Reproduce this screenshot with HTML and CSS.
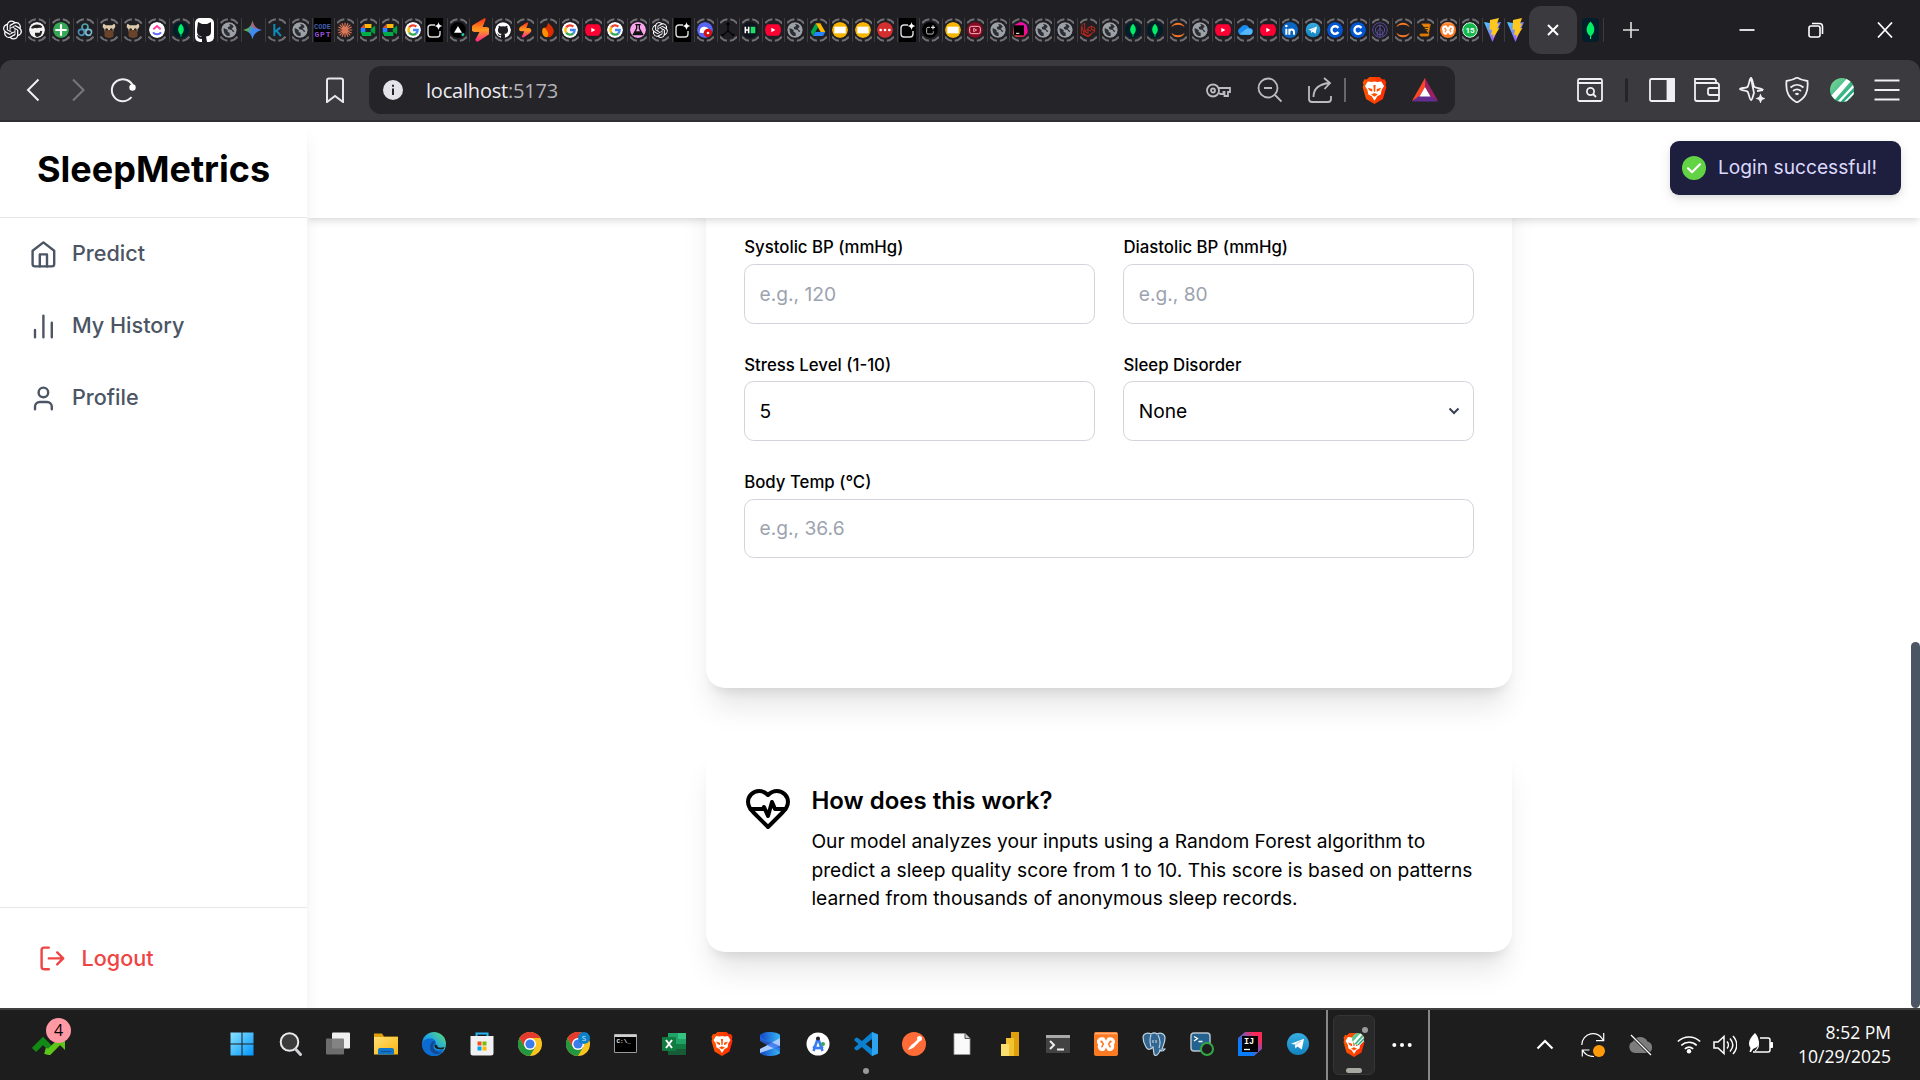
FILE: index.html
```html
<!DOCTYPE html>
<html lang="en">
<head>
<meta charset="utf-8">
<title>SleepMetrics</title>
<link rel="stylesheet" href="styles.css">
</head>
<body>
<svg class="defs" aria-hidden="true">
<defs>
<linearGradient id="g-gem" x1="0" y1="0.3" x2="1" y2="0.7"><stop offset="0" stop-color="#f5b51c"/><stop offset=".25" stop-color="#4fae5c"/><stop offset=".5" stop-color="#3f8bf2"/><stop offset="1" stop-color="#3f86f5"/></linearGradient>
<linearGradient id="g-fire" x1="0" y1="0" x2="0" y2="1"><stop offset="0" stop-color="#ff2d1a"/><stop offset=".5" stop-color="#ff9a1f"/><stop offset="1" stop-color="#ff1f8f"/></linearGradient>
<linearGradient id="g-vite" x1="0" y1="0" x2="1" y2="1"><stop offset="0" stop-color="#41d1ff"/><stop offset="1" stop-color="#bd34fe"/></linearGradient>
<linearGradient id="g-win" x1="0" y1="0" x2="1" y2="1"><stop offset="0" stop-color="#8be3ff"/><stop offset="1" stop-color="#0095ff"/></linearGradient>
<linearGradient id="g-edge" x1="0" y1="1" x2="1" y2="0"><stop offset="0" stop-color="#0a63c9"/><stop offset=".5" stop-color="#1fa5e6"/><stop offset="1" stop-color="#5fe06a"/></linearGradient>
<linearGradient id="g-brave" x1="0" y1="0" x2="1" y2="0"><stop offset="0" stop-color="#ff5601"/><stop offset="1" stop-color="#ff2a00"/></linearGradient>
<linearGradient id="g-fold" x1="0" y1="0" x2="1" y2="1"><stop offset="0" stop-color="#ffdf75"/><stop offset="1" stop-color="#f9b50b"/></linearGradient>
<linearGradient id="g-cyl" x1="0" y1="0" x2="1" y2="0"><stop offset="0" stop-color="#1146c8"/><stop offset="1" stop-color="#38b6f5"/></linearGradient>
<linearGradient id="g-ij" x1="0" y1="1" x2="1" y2="0"><stop offset=".3" stop-color="#087cfa"/><stop offset=".55" stop-color="#7a55b5"/><stop offset=".8" stop-color="#fe2857"/></linearGradient>
<linearGradient id="g-pink" x1="0" y1="1" x2="1" y2="0"><stop offset="0" stop-color="#ff7a1a"/><stop offset=".4" stop-color="#ff0a78"/><stop offset="1" stop-color="#e010c8"/></linearGradient>
<linearGradient id="g-green" x1="0" y1="0" x2="1" y2="1"><stop offset="0" stop-color="#7fd99a"/><stop offset="1" stop-color="#0d9d78"/></linearGradient>
<linearGradient id="g-tg" x1="0" y1="0" x2="0" y2="1"><stop offset="0" stop-color="#37aee2"/><stop offset="1" stop-color="#1282c0"/></linearGradient>
</defs>
<symbol id="openai" viewBox="0 0 24 24"><path fill="#fff" d="M22.2819 9.8211a5.9847 5.9847 0 0 0-.5157-4.9108 6.0462 6.0462 0 0 0-6.5098-2.9A6.0651 6.0651 0 0 0 4.9807 4.1818a5.9847 5.9847 0 0 0-3.9977 2.9 6.0462 6.0462 0 0 0 .7427 7.0966 5.98 5.98 0 0 0 .511 4.9107 6.051 6.051 0 0 0 6.5146 2.9001A5.9847 5.9847 0 0 0 13.2599 24a6.0557 6.0557 0 0 0 5.7718-4.2058 5.9894 5.9894 0 0 0 3.9977-2.9001 6.0557 6.0557 0 0 0-.7475-7.0729zm-9.022 12.6081a4.4755 4.4755 0 0 1-2.8764-1.0408l.1419-.0804 4.7783-2.7582a.7948.7948 0 0 0 .3927-.6813v-6.7369l2.02 1.1686a.071.071 0 0 1 .038.052v5.5826a4.504 4.504 0 0 1-4.4945 4.4944zm-9.6607-4.1254a4.4708 4.4708 0 0 1-.5346-3.0137l.142.0852 4.783 2.7582a.7712.7712 0 0 0 .7806 0l5.8428-3.3685v2.3324a.0804.0804 0 0 1-.0332.0615L9.74 19.9502a4.4992 4.4992 0 0 1-6.1408-1.6464zM2.3408 7.8956a4.485 4.485 0 0 1 2.3655-1.9728V11.6a.7664.7664 0 0 0 .3879.6765l5.8144 3.3543-2.0201 1.1685a.0757.0757 0 0 1-.071 0l-4.8303-2.7865A4.504 4.504 0 0 1 2.3408 7.872zm16.5963 3.8558L13.1038 8.364 15.1192 7.2a.0757.0757 0 0 1 .071 0l4.8303 2.7913a4.4944 4.4944 0 0 1-.6765 8.1042v-5.6772a.79.79 0 0 0-.407-.667zm2.0107-3.0231l-.142-.0852-4.7735-2.7818a.7759.7759 0 0 0-.7854 0L9.409 9.2297V6.8974a.0662.0662 0 0 1 .0284-.0615l4.8303-2.7866a4.4992 4.4992 0 0 1 6.6802 4.66zM8.3065 12.863l-2.02-1.1638a.0804.0804 0 0 1-.038-.0567V6.0742a4.4992 4.4992 0 0 1 7.3757-3.4537l-.142.0805L8.704 5.459a.7948.7948 0 0 0-.3927.6813zm1.0976-2.3654l2.602-1.4998 2.6069 1.4998v2.9994l-2.5974 1.4997-2.6067-1.4997Z"/></symbol>
<symbol id="beard" viewBox="0 0 24 24"><circle cx="12" cy="12" r="12" fill="#f3f3f3"/><path d="M3 9c2-6 13-7 17-2l-2 2c-4-1-6 1-8 0-3 0-4 2-7 0zM9 16h7l1-3 3 1-2 6-6 3-3-3z" fill="#252020"/></symbol>
<symbol id="plus" viewBox="0 0 24 24"><circle cx="12" cy="12" r="12" fill="#34a853"/><path d="M12 3.500v17M3.500 12h17" stroke="#fff" stroke-width="3.200"/></symbol>
<symbol id="trio" viewBox="0 0 24 24"><g fill="none" stroke-width="2.600"><circle cx="12" cy="7.500" r="4.500" stroke="#4fa3a8"/><circle cx="6.500" cy="15.500" r="4.500" stroke="#4c8fb8"/><circle cx="17.500" cy="15.500" r="4.500" stroke="#79b8cf"/></g></symbol>
<symbol id="goat" viewBox="0 0 24 24"><path d="M4 1c-3 5-1 8 1 9l2 12h10l2-12c2-1 4-4 1-9-1 3-3 4-5 4H9C7 5 5 4 4 1z" fill="#dcc9ab"/><path d="M6 12h12l1 8-4 4H9l-4-4z" fill="#6b422a"/><circle cx="8.500" cy="11" r="1.800" fill="#222"/><circle cx="15.500" cy="11" r="1.800" fill="#222"/></symbol>
<symbol id="clickup" viewBox="0 0 24 24"><circle cx="12" cy="12" r="12" fill="#fff"/><path d="M6.500 11 12 6l5.500 5" fill="none" stroke="#ff3fa0" stroke-width="3"/><path d="M6 15.500c3 4 9 4 12 0" fill="none" stroke="#5d6bff" stroke-width="3"/></symbol>
<symbol id="mongo" viewBox="0 0 24 24"><rect width="24" height="24" rx="9" fill="#021e2b"/><path d="M12 2.500c6 6 5 12 .6 16.500V22h-1.200v-3C7 14.500 6 8.500 12 2.500z" fill="#00ed64"/></symbol>
<symbol id="github" viewBox="0 0 24 24"><path fill="#fff" d="M12 .5a12 12 0 0 0-3.800 23.400c.6.1.8-.3.8-.6v-2.200c-3.300.7-4-1.400-4-1.400-.6-1.400-1.300-1.800-1.300-1.800-1.100-.7.100-.7.100-.7 1.200.1 1.800 1.200 1.800 1.200 1.100 1.800 2.800 1.300 3.500 1 .1-.8.400-1.300.8-1.600-2.700-.3-5.500-1.300-5.500-5.900 0-1.300.5-2.400 1.200-3.200-.1-.3-.5-1.500.1-3.200 0 0 1-.3 3.300 1.200a11.500 11.500 0 0 1 6 0c2.300-1.500 3.300-1.200 3.300-1.200.7 1.700.2 2.900.1 3.200.8.800 1.200 1.900 1.200 3.200 0 4.600-2.800 5.600-5.500 5.900.4.400.8 1.100.8 2.200v3.300c0 .3.200.7.8.6A12 12 0 0 0 12 .5z"/></symbol>
<symbol id="globe" viewBox="0 0 24 24"><circle cx="12" cy="12" r="11.500" fill="#9aa0a6"/><path d="M4 9l6 3 0 3 3 1v5c-5 1-10-4-9-12zM12 3c3 0 6 1 7 4l-3 3 4 4c-2 2-3 0-4-2l-5-1-1-3 4-2z" fill="#2d2e33"/></symbol>
<symbol id="gemini" viewBox="0 0 24 24"><path d="M12 0c1.500 7 5 10.500 12 12-7 1.500-10.500 5-12 12C10.500 17 7 13.500 0 12 7 10.500 10.500 7 12 0z" fill="url(#g-gem)"/><path d="M12 0c1.500 7 5 10.500 12 12-6-1-11-2-14-5z" fill="#f04438" opacity=".6"/></symbol>
<symbol id="kaggle" viewBox="0 0 24 24"><path d="M8 3v18M17 8.500l-8 6M11 13l7 8" fill="none" stroke="#0e8ab8" stroke-width="3"/></symbol>
<symbol id="claude" viewBox="0 0 24 24"><path d="M12 1v22M1 12h22M4 4l16 16M20 4 4 20M7.500 2l9 20M16.500 2l-9 20M2 7.500l20 9M2 16.500l20-9" stroke="#d97757" stroke-width="1.800"/></symbol>
<symbol id="meet" viewBox="0 0 24 24"><path d="M1 9l6-6h10v6H8v6H1z" fill="#2684fc"/><path d="M7 3h10v6H7z" fill="#ffba00"/><path d="M1 9l6-6v6z" fill="#ea4335"/><path d="M1 15h16v6H3z" fill="#00ac47"/><path d="M16 11l7-6v14l-7-5z" fill="#00a040"/></symbol>
<symbol id="google" viewBox="0 0 24 24"><circle cx="12" cy="12" r="12" fill="#fff"/><g fill="none" stroke-width="3.400"><path d="M6.300 8.200A7 7 0 0 1 17 7" stroke="#ea4335"/><path d="M6.300 8.200a7 7 0 0 0 0 7.600" stroke="#fbbc05"/><path d="M6.300 15.800A7 7 0 0 0 17 17" stroke="#34a853"/><path d="M17 17a7 7 0 0 0 2-5h-7" stroke="#4285f4"/></g></symbol>
<symbol id="spark" viewBox="0 0 17 24"><path d="M9 7H5a3 3 0 0 0-3 3v6a3 3 0 0 0 3 3h6a3 3 0 0 0 3-3v-3" fill="none" stroke="#ddd" stroke-width="1.400"/><path d="M12.500 4c.5 2.600 1.500 3.600 4 4-2.500.5-3.500 1.500-4 4-.5-2.500-1.500-3.500-4-4 2.500-.4 3.500-1.400 4-4z" fill="#fff"/></symbol>
<symbol id="vercel" viewBox="0 0 24 24"><circle cx="12" cy="12" r="12" fill="#000"/><path d="M12 6l6 10H6z" fill="#fff"/><circle cx="19.500" cy="19" r="2.500" fill="#1fc2a0"/></symbol>
<symbol id="bolt" viewBox="0 0 24 24"><path d="M16 0 5 7c-3 3-2 6 1 7h5L7 22l2 2 10-7c4-3 3-7-1-8h-4l3-8z" fill="url(#g-fire)"/></symbol>
<symbol id="flame" viewBox="0 0 24 24"><path d="M12 1c8 7 11 12 7 18-3 5-11 5-14 0-3-5 0-9 3-11 2 1 3-3 4-7z" fill="#dd2c00"/><path d="M4 10c3-4 6 2 8 6 1 3 0 6-2 7-6-1-8-8-6-13z" fill="#ff9100"/></symbol>
<symbol id="youtube" viewBox="0 0 24 24"><rect y="3.500" width="24" height="17" rx="4.500" fill="#ff0033"/><path d="M9.500 8.500v7l6-3.500z" fill="#fff"/></symbol>
<symbol id="flask" viewBox="0 0 24 24"><circle cx="12" cy="12" r="12" fill="#f8a5ee"/><path d="M8 4h8M10 4v6l-5 9h14l-5-9V4" fill="none" stroke="#111" stroke-width="2"/><path d="M8 14h8l3 5H5z" fill="#111"/></symbol>
<symbol id="discord" viewBox="0 0 24 24"><circle cx="12" cy="12" r="12" fill="#5865f2"/><path d="M4 16c0-7 3-9 7-9s6 2 7 5l-5 5z" fill="#fff"/><circle cx="16.500" cy="16.500" r="6.500" fill="#d90f0f"/><circle cx="16.500" cy="16.500" r="2" fill="#fff"/></symbol>
<symbol id="tripod" viewBox="0 0 24 24"><path d="M12 2v11L3 21m9-8 9 8" fill="none" stroke="#050505" stroke-width="2"/><circle cx="12" cy="3" r="2.500"/><circle cx="3" cy="20" r="2.500"/><circle cx="21" cy="20" r="2.500"/></symbol>
<symbol id="hacker" viewBox="0 0 24 24"><circle cx="12" cy="12" r="12" fill="#0d141e"/><path d="M5 7v10M10 7v10M5 12h5" stroke="#fff" stroke-width="2.400"/><path d="M13 7h7v10h-7z" fill="#1ee065"/></symbol>
<symbol id="drive" viewBox="0 0 24 24"><path d="M8.500 2 1 15l3.500 6L12 8z" fill="#00ac47"/><path d="M8.500 2h7L23 15h-7z" fill="#ffba00"/><path d="M4.500 21 8 15h15l-3.500 6z" fill="#2684fc"/></symbol>
<symbol id="slides" viewBox="0 0 24 24"><circle cx="12" cy="12" r="12" fill="#f5b400"/><rect x="3.500" y="7" width="17" height="10" fill="#fff"/></symbol>
<symbol id="dots" viewBox="0 0 24 24"><circle cx="12" cy="12" r="12" fill="#d32f2f"/><g fill="#fff"><circle cx="5.500" cy="12" r="2"/><circle cx="12" cy="12" r="2"/><circle cx="18.500" cy="12" r="2"/></g></symbol>
<symbol id="sparkc" viewBox="0 0 24 24"><circle cx="12" cy="12" r="12" fill="#000"/><path d="M12 8H9a2 2 0 0 0-2 2v6a2 2 0 0 0 2 2h6a2 2 0 0 0 2-2v-2" fill="none" stroke="#bbb" stroke-width="1.500"/><path d="M16.500 5v6M13.500 8h6" stroke="#fff" stroke-width="1.500"/></symbol>
<symbol id="ytred" viewBox="0 0 24 24"><circle cx="12" cy="12" r="12" fill="#8b0a22"/><rect x="4" y="6.500" width="16" height="11" rx="3" fill="none" stroke="#f4bcc6" stroke-width="1.500"/><path d="M10 9.500v5l4.500-2.500z" fill="none" stroke="#f4bcc6" stroke-width="1.300"/></symbol>
<symbol id="jb" viewBox="0 0 24 24"><path d="M3 5 12 0h10l2 16-6 6H1z" fill="url(#g-pink)"/><rect x="3" y="5" width="15" height="15" fill="#000"/><path d="M6 17h5" stroke="#fff" stroke-width="1.500"/></symbol>
<symbol id="laravel" viewBox="0 0 24 24"><path d="M2 4l5-2 0 12 5 3 0-8 5-3 5 3v5l-10 7-6-4zM7 14l5-3 5 3M17 6v5l5 2M2 4v13l10 5 5-3" fill="none" stroke="#b2261c" stroke-width="1.600"/></symbol>
<symbol id="jupyter" viewBox="0 0 24 24"><path d="M2 8C5-1 19-1 22 8 17 3 7 3 2 8zM2 16c3 9 17 9 20 0-5 5-15 5-20 0z" fill="#f37726"/></symbol>
<symbol id="cloud" viewBox="0 0 24 24"><path d="M6 19a5.500 5.500 0 0 1-1-10.500A7.500 7.500 0 0 1 18.500 9 5 5 0 0 1 19 19z" fill="#1a8cf0"/><path d="M4 18 16 9l7 3c1 4 0 7-4 7H6z" fill="#55b8ff"/></symbol>
<symbol id="linkedin" viewBox="0 0 24 24"><rect width="24" height="24" rx="6" fill="#0a66c2"/><path d="M6.500 10v9M11 19v-9m0 5c0-5 7-5 7 0v4" fill="none" stroke="#fff" stroke-width="3"/><circle cx="6.500" cy="6" r="1.900" fill="#fff"/></symbol>
<symbol id="telegram" viewBox="0 0 24 24"><circle cx="12" cy="12" r="11" fill="url(#g-tg)"/><path d="M5 11.800 18 6.700 15.800 17.500l-4.300-2.900-2.100 2-.6-4z" fill="#fff"/><path d="M9 13l6-4" stroke="#a9c9dd"/></symbol>
<symbol id="coursera" viewBox="0 0 24 24"><circle cx="12" cy="12" r="12" fill="#0056d2"/><path d="M17 9a5.600 5.600 0 1 0 0 6" fill="none" stroke="#fff" stroke-width="3.600"/></symbol>
<symbol id="mesh" viewBox="0 0 24 24"><g fill="none" stroke="#5b51a0" stroke-width="1.500"><circle cx="12" cy="12" r="11"/><circle cx="12" cy="12" r="7"/><path d="M12 4v19M8 21v-7l4-4 4 4v7"/></g></symbol>
<symbol id="book" viewBox="0 0 24 24"><path d="M7 3h13l-3 15H5a2 2 0 0 0 0 3h12l1-3" fill="#f28a0c" stroke="#c96a00" stroke-width="1.500"/><path d="M10 8h7M9.500 11.500h7" stroke="#3a2a10" stroke-width="1.500"/></symbol>
<symbol id="xampp" viewBox="0 0 24 24"><rect width="24" height="24" rx="2" fill="#fb7a24"/><path d="M1 1.500h22" stroke="#ffb27c" stroke-width="1.500"/><path d="M9.300 17.300H8a2.700 2.700 0 0 1-1.300-5A2.700 2.700 0 0 1 8 7h1.300l5.400 10.300H16a2.700 2.700 0 0 0 1.300-5A2.700 2.700 0 0 0 16 7h-1.300z" fill="none" stroke="#fff" stroke-width="3.300" stroke-linejoin="round"/></symbol>
<symbol id="vite" viewBox="0 0 17 24"><path d="M0 4 8.500 24 17 4 8.500 5.500z" fill="url(#g-vite)"/><path d="M15 0 6 2 5.500 12l2.500-.5L7 17l2.500-.5-.8 4L15.500 10l-2.500.5L15 5.500l-2 .3z" fill="#ffc81e"/></symbol>
<symbol id="brave" viewBox="0 0 24 24"><path d="M7.500 0h9l2.500 2.200 2-.2 1.500 3-.7 1.700.7 2.300-3 10.500L12 24l-7.500-4.500L1.500 9l.7-2.300L1.500 5 3 2l2 .2z" fill="url(#g-brave)"/><path d="M6 4l3.500.5L12 4l2.500.5L18 4l2.500 4-2.200 3.500-.8 4-3 1.500L12 21l-2.500-4-3-1.500-.8-4L3.500 8z" fill="#fff"/><path d="M6 9.500l4 1.200v2.500L7.500 12zM18 9.500l-4 1.200v2.500l2.500-1.200zM11 7h2l-.4 6h-1.200zM9 15.500l3-1.300 3 1.300-3 2z" fill="#ff5000"/></symbol>
<symbol id="chrome" viewBox="0 0 24 24"><circle cx="12" cy="12" r="12" fill="#fcc31e"/><path d="M1.600 6A12 12 0 0 0 12 24l5.200-9L12 12 6.800 15z" fill="#23973f"/><path d="M12 6h10.400A12 12 0 0 0 1.600 6l5.200 9z" fill="#e33b2e"/><circle cx="12" cy="12" r="6" fill="#fff"/><circle cx="12" cy="12" r="4.600" fill="#3a7cec"/></symbol>
<symbol id="avatar" viewBox="0 0 24 24"><circle cx="12" cy="12" r="12" fill="url(#g-green)"/><path d="M1.500 17.500 16.500 1l4 2.500L5 21.500zM8 23 23 7l.8 2.500L10.500 23.700zM14 23.800l9.800-10v2.500l-7 7z" fill="#fff"/></symbol>
</svg>

<header class="browser">
<div class="tabstrip">
<div class="tabs">
<span class="tab wide plain"><svg><use href="#openai"/></svg></span>
<span class="tab wide"><svg><use href="#beard"/></svg></span>
<span class="tab wide"><svg><use href="#plus"/></svg></span>
<span class="tab wide"><svg><use href="#trio"/></svg></span>
<span class="tab wide"><svg><use href="#goat"/></svg></span>
<span class="tab wide"><svg><use href="#goat"/></svg></span>
<span class="tab wide"><svg><use href="#clickup"/></svg></span>
<span class="tab wide"><svg><use href="#mongo"/></svg></span>
<span class="tab wide plain"><svg class="hub" viewBox="0 0 19 24" preserveAspectRatio="none"><rect width="19" height="24" rx="5" fill="#fff"/><path fill="#1b1a1f" d="M3 4l4 2h5l4-2v9c0 4-1 5-5 5.500l1 5.500H7v-3c-3 0-4-1-5-4 2 0 3 3 5 1.500C3 18 2 16 2 12z"/></svg></span>
<span class="tab wide"><svg><use href="#globe"/></svg></span>
<span class="tab wide plain"><svg><use href="#gemini"/></svg></span>
<span class="tab wide"><svg><use href="#kaggle"/></svg></span>
<span class="tab"><svg><use href="#globe"/></svg></span>
<span class="tab square"><svg viewBox="0 0 17 24"><text x="0" y="11" font-size="7" textLength="17" font-weight="700" font-family="Liberation Mono" fill="#4460b0">CODE</text><text x="0.500" y="18.500" font-size="8" textLength="16" font-weight="700" font-family="Liberation Mono" fill="#9550d5">GPT</text></svg></span>
<span class="tab"><svg><use href="#claude"/></svg></span>
<span class="tab"><svg><use href="#meet"/></svg></span>
<span class="tab"><svg><use href="#meet"/></svg></span>
<span class="tab"><svg><use href="#google"/></svg></span>
<span class="tab square"><svg><use href="#spark"/></svg></span>
<span class="tab"><svg><use href="#vercel"/></svg></span>
<span class="tab plain"><svg preserveAspectRatio="none" viewBox="4 0 16 24"><use href="#bolt" width="24" height="24"/></svg></span>
<span class="tab"><svg><use href="#github"/></svg></span>
<span class="tab"><svg><use href="#bolt"/></svg></span>
<span class="tab"><svg><use href="#flame"/></svg></span>
<span class="tab"><svg><use href="#google"/></svg></span>
<span class="tab"><svg><use href="#youtube"/></svg></span>
<span class="tab"><svg><use href="#google"/></svg></span>
<span class="tab"><svg><use href="#flask"/></svg></span>
<span class="tab"><svg><use href="#openai"/></svg></span>
<span class="tab square"><svg><use href="#spark"/></svg></span>
<span class="tab"><svg><use href="#discord"/></svg></span>
<span class="tab"><svg><use href="#tripod"/></svg></span>
<span class="tab"><svg><use href="#hacker"/></svg></span>
<span class="tab"><svg><use href="#youtube"/></svg></span>
<span class="tab"><svg><use href="#globe"/></svg></span>
<span class="tab"><svg><use href="#drive"/></svg></span>
<span class="tab"><svg><use href="#slides"/></svg></span>
<span class="tab"><svg><use href="#slides"/></svg></span>
<span class="tab"><svg><use href="#dots"/></svg></span>
<span class="tab square"><svg><use href="#spark"/></svg></span>
<span class="tab"><svg><use href="#sparkc"/></svg></span>
<span class="tab"><svg><use href="#slides"/></svg></span>
<span class="tab"><svg><use href="#ytred"/></svg></span>
<span class="tab"><svg><use href="#globe"/></svg></span>
<span class="tab"><svg><use href="#jb"/></svg></span>
<span class="tab"><svg><use href="#globe"/></svg></span>
<span class="tab"><svg><use href="#globe"/></svg></span>
<span class="tab"><svg><use href="#laravel"/></svg></span>
<span class="tab"><svg><use href="#globe"/></svg></span>
<span class="tab"><svg><use href="#mongo"/></svg></span>
<span class="tab"><svg><use href="#mongo"/></svg></span>
<span class="tab"><svg><use href="#jupyter"/></svg></span>
<span class="tab"><svg><use href="#globe"/></svg></span>
<span class="tab"><svg><use href="#youtube"/></svg></span>
<span class="tab"><svg><use href="#cloud"/></svg></span>
<span class="tab"><svg><use href="#youtube"/></svg></span>
<span class="tab"><svg><use href="#linkedin"/></svg></span>
<span class="tab"><svg><use href="#telegram"/></svg></span>
<span class="tab"><svg><use href="#coursera"/></svg></span>
<span class="tab"><svg><use href="#coursera"/></svg></span>
<span class="tab"><svg><use href="#mesh"/></svg></span>
<span class="tab"><svg><use href="#jupyter"/></svg></span>
<span class="tab"><svg><use href="#book"/></svg></span>
<span class="tab"><svg><use href="#xampp"/></svg></span>
<span class="tab"><svg viewBox="0 0 24 24"><circle cx="12" cy="12" r="11" fill="#12b84b" stroke="#e8fff0" stroke-width="1.500"/><text x="12" y="16.300" text-anchor="middle" font-size="12" font-weight="700" font-family="Roboto" fill="#fff">15</text></svg></span>
<span class="tab plain"><svg><use href="#vite"/></svg></span>
<span class="tab plain last"><svg><use href="#vite"/></svg></span>
</div>
<div class="tab-active"><svg viewBox="0 0 12 12"><path d="M1 1l10 10M11 1 1 11" stroke="#fff" stroke-width="2"/></svg></div>
<span class="tab plain after"><svg viewBox="0 0 17 24"><rect width="17" height="24" rx="4" fill="#021e2b"/><path d="M8.500 3.500c5 5 5 11 .6 14.500v3H8v-3C3.500 14.500 3.500 8.500 8.500 3.500z" fill="#00ed64"/></svg></span>
<svg class="newtab" viewBox="0 0 16 16"><path d="M8 0v16M0 8h16" stroke="#e0e0e0" stroke-width="1.600"/></svg>
<div class="winctl">
<svg viewBox="0 0 16 16"><path d="M.5 8h15" stroke="#fff" stroke-width="1.700"/></svg>
<svg viewBox="0 0 16 16" fill="none" stroke="#fff" stroke-width="1.600"><rect x="1" y="4" width="11" height="11" rx="2"/><path d="M4 1.500h7.500a3 3 0 0 1 3 3V12"/></svg>
<svg viewBox="0 0 16 16"><path d="M1 .5l14 15M15 .5l-14 15" stroke="#fff" stroke-width="1.700"/></svg>
</div>
</div>

<div class="toolbar">
<div class="nav-buttons">
<svg viewBox="0 0 26 26"><path d="M18.500 2.500 8 13l10.500 10.500" stroke="#f0f0f2"/></svg>
<svg viewBox="0 0 26 26"><path d="M8 2.500 18.500 13 8 23.500" stroke="#78777c"/></svg>
<svg viewBox="0 0 26 26"><path d="M23 9A11 11 0 1 0 21.500 20" stroke="#f0f0f2"/><circle cx="22.500" cy="10.500" r="3.200" fill="#fff"/></svg>
</div>
<svg class="bookmark" viewBox="0 0 26 26"><path d="M5 3.500a2 2 0 0 1 2-2h12a2 2 0 0 1 2 2V25l-8-6-8 6z" stroke="#e8e8ec"/></svg>
<div class="address">
<svg class="info" viewBox="0 0 20 20"><circle cx="10" cy="10" r="10" fill="#e4e3ea"/><path d="M10 8.500V15M10 4.800v2" stroke="#252429" stroke-width="2"/></svg>
<span class="url">localhost<span class="port">:5173</span></span>
<div class="address-actions">
<svg viewBox="0 0 26 26"><circle cx="8" cy="13.500" r="6"/><circle cx="8" cy="13.500" r="2"/><path d="M13.500 11H25v4h-2v4h-3.500v-4h-1v2h-3l-2-1"/></svg>
<svg viewBox="0 0 26 26"><circle cx="12" cy="11" r="9.500"/><path d="M8 11h8M19 18l6.500 6.500"/></svg>
<svg viewBox="0 0 26 26"><path d="M2 9v13a3 3 0 0 0 3 3h16a3 3 0 0 0 3-3v-3M6.500 20c0-9 6-13 16-14M17 1l6 5-5.500 6"/></svg>
<i class="bar"></i>
<svg class="shield"><use href="#brave"/></svg>
<svg class="bat" viewBox="0 0 26 24"><path d="M13 0v9l-6 10-7 4z" fill="#ff4724" stroke="none"/><path d="M13 0v9l6 10 7 4z" fill="#9e1f63" stroke="none"/><path d="M0 23.500 7 18h12l7 5.500z" fill="#662d91" stroke="none"/><path d="M13 9l5.500 9.500h-11z" fill="#fff" stroke="none"/></svg>
</div>
</div>
<div class="extensions">
<svg viewBox="0 0 26 26"><rect x="1" y="2" width="24" height="22" rx="1.500"/><path d="M1 6h24M16 17l3 3"/><circle cx="13.500" cy="14.500" r="3.600"/></svg>
<i class="bar"></i>
<svg viewBox="0 0 26 26"><rect x="1" y="2" width="24" height="22" rx="1.500"/><path d="M18.500 2H25v22h-6.500z" fill="#f0f0f2"/></svg>
<svg viewBox="0 0 26 26"><path d="M22 6V4a2 2 0 0 0-2-2H1v20a2 2 0 0 0 2 2h20a2 2 0 0 0 2-2V8a2 2 0 0 0-2-2H1M25 11h-9a2 2 0 0 0-2 2v3a2 2 0 0 0 2 2h9"/></svg>
<svg viewBox="0 0 26 26"><path d="M12 1c1.500 0 2 8 3.500 9S24 11.500 24 13M15 16c-1 2-1.500 7-3 7s-2-7-3.500-8.500S1 13.500 1 12s6-.5 7.500-2S10.500 1 12 1zM24 13l-6 1"/><path d="M21.500 16.500l1.500 3.500 3.500 1.500L23 23l-1.500 3.500L20 23l-3.500-1.500L20 20z" fill="#f0f0f2" stroke="none"/></svg>
<svg viewBox="0 0 26 26"><path d="M13 .5c3 2 7 3 10.500 3.500 1 11-2 17-10.500 21.500C4.500 21 1.500 15 2.500 4 6 3.500 10 2.500 13 .5z"/><path d="M6.500 10.500c4-3.500 9-3.500 13 0M9 14c2.500-2 5.500-2 8 0M11.500 17.500c1-1 2-1 3 0"/></svg>
<svg class="avatar"><use href="#avatar"/></svg>
<svg viewBox="0 0 26 26"><path d="M.5 3.500h25M.5 13h25M.5 22.500h25"/></svg>
</div>
</div>
</header>

<div class="app">
<aside class="sidebar">
<div class="brand">SleepMetrics</div>
<nav class="menu">
<a class="menu-item"><svg class="line-icon" viewBox="0 0 24 24"><path d="m3 9 9-7 9 7v11a2 2 0 0 1-2 2H5a2 2 0 0 1-2-2z"/><path d="M9 22V12h6v10"/></svg>Predict</a>
<a class="menu-item"><svg class="line-icon" viewBox="0 0 24 24"><path d="M5 21v-6M12 21V3M19 21V9"/></svg>My History</a>
<a class="menu-item"><svg class="line-icon" viewBox="0 0 24 24"><path d="M19 21v-2a4 4 0 0 0-4-4H9a4 4 0 0 0-4 4v2"/><circle cx="12" cy="7" r="4"/></svg>Profile</a>
</nav>
<div class="logout"><svg class="line-icon" viewBox="0 0 24 24"><path d="m16 17 5-5-5-5M21 12H9M9 21H5a2 2 0 0 1-2-2V5a2 2 0 0 1 2-2h4"/></svg>Logout</div>
</aside>
<div class="content">
<div class="topbar"></div>
<main class="page">
<form class="card form-card">
<label class="field">Systolic BP (mmHg)<input type="text" placeholder="e.g., 120"></label>
<label class="field">Diastolic BP (mmHg)<input type="text" placeholder="e.g., 80"></label>
<label class="field">Stress Level (1-10)<input type="text" value="5"></label>
<label class="field">Sleep Disorder<select><option>None</option></select></label>
<label class="field full">Body Temp (°C)<input type="text" placeholder="e.g., 36.6"></label>
</form>
<section class="card info-card">
<svg class="heart" viewBox="0 0 24 24"><path d="M19 14c1.490-1.460 3-3.210 3-5.500A5.500 5.500 0 0 0 16.500 3c-1.760 0-3 .5-4.500 2-1.500-1.500-2.740-2-4.500-2A5.500 5.500 0 0 0 2 8.500c0 2.300 1.500 4.050 3 5.500l7 7Z"/><path d="M3.220 12H9.500l.5-1 2 4.500 2-7 1.500 3.500h5.270"/></svg>
<div>
<h3>How does this work?</h3>
<p>Our model analyzes your inputs using a Random Forest algorithm to predict a sleep quality score from 1 to 10. This score is based on patterns learned from thousands of anonymous sleep records.</p>
</div>
</section>
</main>
</div>
<div class="toast"><svg viewBox="0 0 24 24"><circle cx="12" cy="12" r="12" fill="#61d345"/><path d="m6 12.300 4 4 8-8" fill="none" stroke="#fff" stroke-width="2.200" stroke-linecap="round" stroke-linejoin="round"/></svg><span>Login successful!</span></div>
<div class="scroll-thumb"></div>
</div>

<footer class="taskbar">
<div class="widget">
<svg viewBox="0 0 34 24"><path d="M2 19 11 10l7 7" fill="none" stroke="#138a15" stroke-width="6"/><path d="M13 20l4 1L30 8" fill="none" stroke="#5cc51a" stroke-width="6"/><path d="M17 2h16v17l-6-6z" fill="#5cc51a"/></svg>
<span class="badge">4</span>
</div>
<div class="apps">
<span class="app-icon"><svg viewBox="0 0 24 24"><path d="M.5.500h11v11H.5zM12.500.500h11v11h-11zM.5 12.500h11v11H.5zM12.500 12.500h11v11h-11z" fill="url(#g-win)"/></svg></span>
<span class="app-icon"><svg viewBox="0 0 24 24"><circle cx="11.500" cy="10" r="8.800" fill="#3c3c3c" stroke="#e9e9ec" stroke-width="2"/><path d="m17.500 17 5 5.500" stroke="#d0d0d6" stroke-width="3" stroke-linecap="round"/></svg></span>
<span class="app-icon"><svg viewBox="0 0 24 24"><rect x="6" y=".5" width="18" height="16" rx="1" fill="#f0f0f0"/><rect y="6.500" width="18" height="16" rx="1" fill="#777" opacity=".9"/></svg></span>
<span class="app-icon"><svg viewBox="0 0 24 24"><path d="M0 1.500h8l2 3H24v10H0z" fill="#e0a00a"/><path d="M0 5h24v17.500H0z" fill="url(#g-fold)"/><path d="M4 22.500V18a2 2 0 0 1 2-2h12a2 2 0 0 1 2 2v4.500z" fill="#0f76c9"/><path d="M7 19.500h10" stroke="#0a4f94"/></svg></span>
<span class="app-icon"><svg viewBox="0 0 24 24"><circle cx="12" cy="12" r="12" fill="url(#g-edge)"/><path d="M0 12C1 6 13 4 14 11c0 2-2 2-2 4 1 4 6 4 10 2-2 5-7 7-10 7C5 24 0 19 0 12z" fill="#0c6bd0"/><path d="M8 15c0 7 8 9 12 5-3 1-9-1-9-6 0-2 2-3 2-5-3 0-5 3-5 6z" fill="#114a93"/><path d="M12.500 14c0 3 5 4 9 3l1-2c-4 1-7 1-7-1 0-1-3-3-3 0z" fill="#1d1d1d"/></svg></span>
<span class="app-icon"><svg viewBox="0 0 24 24"><path d="M6.500 6V1.500h11V6" fill="none" stroke="#27b4f5" stroke-width="2"/><path d="M.5 4h23v17a2.500 2.500 0 0 1-2.500 2.500H3A2.500 2.500 0 0 1 .5 21z" fill="#f1f1f3"/><path d="M7.500 9.500h4v4h-4z" fill="#f25022"/><path d="M12.500 9.500h4v4h-4z" fill="#7fba00"/><path d="M7.500 14.500h4v4h-4z" fill="#00a4ef"/><path d="M12.500 14.500h4v4h-4z" fill="#ffb900"/></svg></span>
<span class="app-icon"><svg><use href="#chrome"/></svg></span>
<span class="app-icon"><svg viewBox="0 0 24 24"><use href="#chrome" width="24" height="24"/><circle cx="18" cy="6" r="6" fill="#0b82c8"/><text x="18" y="9" text-anchor="middle" font-size="8" font-family="Open Sans" fill="#cfeaff">S</text></svg></span>
<span class="app-icon"><svg viewBox="0 0 24 24"><path d="M.5 2.500h22v18H.5z" fill="#000" stroke="#9b9b9b"/><path d="M.5 2.500h22v2.500H.5z" fill="#d0d0d0"/><text x="2.500" y="11" font-size="6" font-weight="700" font-family="Liberation Mono" fill="#eee">C:\_</text></svg></span>
<span class="app-icon"><svg viewBox="0 0 24 24"><path d="M6 1h18v22H6z" fill="#21a366"/><path d="M16 1h8v6h-8z" fill="#33c481"/><path d="M6 12h10v11H6zM16 12h8v5h-8z" fill="#107c41"/><path d="M6 17h18v6H6z" fill="#185c37"/><rect y="5" width="14" height="14" rx="1" fill="#107c41"/><path d="M4 8l6 8M10 8l-6 8" stroke="#fff" stroke-width="2"/></svg></span>
<span class="app-icon"><svg><use href="#brave"/></svg></span>
<span class="app-icon"><svg viewBox="0 0 24 24"><path d="M2 3c3-4 17-4 20 0v5L12 11 2 7z" fill="url(#g-cyl)"/><path d="M2 21c3 4 17 4 20 0v-5l-10-3L2 17z" fill="url(#g-cyl)"/><path d="M2 17 22 6v8L2 21z" fill="#a9cbff"/><path d="M2 3c2 4 6 5 10 6.500L22 14v7c-2-4-7-5-12-7.500L2 9z" fill="#2a6be8" opacity=".75"/></svg></span>
<span class="app-icon"><svg viewBox="0 0 24 24"><circle cx="12" cy="12" r="11.500" fill="#fff"/><path d="M12 6 7.500 19M12 6l4.500 13M7 14.500c3 2 7 2 10 0" fill="none" stroke="#3b7cf0" stroke-width="2.600"/><circle cx="12" cy="6.500" r="2" fill="#222"/><circle cx="17" cy="12" r="2" fill="#34a853"/></svg></span>
<span class="app-icon running"><svg viewBox="0 0 24 24"><path d="M18 0l6 2.500v19L18 24 1 9l-1-1 2-2.500 2 .5L18 17V7L4 18l-2 .5L0 16l17-15z" fill="#0b7fd0"/><path d="M18 0l6 2.500v19L18 24z" fill="#2ca4f0"/></svg></span>
<span class="app-icon"><svg viewBox="0 0 24 24"><circle cx="12" cy="12" r="12" fill="#ff6c37"/><path d="M6 18c1-3 3-5 6-7l5-5 2 2-5 5c-2 3-5 4-8 5z" fill="#fff"/><circle cx="17.500" cy="6.500" r="2.500" fill="#fff"/></svg></span>
<span class="app-icon"><svg viewBox="0 0 24 24"><path d="M4 1.500h11l5 5v16H4z" fill="#fafafa" stroke="#999" stroke-width=".8"/><path d="M15 1.500v5h5" fill="#ccc" stroke="#555"/></svg></span>
<span class="app-icon"><svg viewBox="0 0 24 24"><rect x="13" width="8" height="24" fill="#dfa00c"/><rect x="8" y="6" width="8" height="18" fill="#f2c230"/><rect x="3" y="12" width="8" height="12" fill="#fadf6e"/></svg></span>
<span class="app-icon"><svg viewBox="0 0 24 24"><path d="M0 3h24v18H0z" fill="#424242"/><path d="M0 3h24v3H0z" fill="#aaa"/><path d="m4 9 4 4-4 4M11 17.500h7" fill="none" stroke="#eee" stroke-width="2"/></svg></span>
<span class="app-icon"><svg><use href="#xampp"/></svg></span>
<span class="app-icon"><svg viewBox="0 0 24 24"><path d="M1 5c1-5 6-4 8-3 3-2 5-1 6 0 4-2 8 0 8 4 0 5-2 8-3 11l3 0c-2 3-4 2-5 1-1 5-5 7-6 4l-1-7c-2 2-5 4-7 0C2 12 1 8 1 5z" fill="#336791" stroke="#c3d5e4" stroke-width="1.200"/><path d="M9 3c-2 5-1 8 0 12M16 3c2 4 3 8 1 13M11 8v3M14 8v3" fill="none" stroke="#c3d5e4" stroke-width="1.100"/></svg></span>
<span class="app-icon"><svg viewBox="0 0 24 24"><rect x="1" y="1" width="19" height="18" rx="3" fill="#24628f" stroke="#b8c3cc" stroke-width="1.500"/><path d="M4 4.500l3.500 2L4 9M8.500 9.500h4" fill="none" stroke="#fff" stroke-width="1.300"/><circle cx="17" cy="17" r="6" fill="#1d1d1d" stroke="#34a845" stroke-width="2"/></svg></span>
<span class="app-icon"><svg viewBox="0 0 24 24"><path d="M0 6 7 0h17v17l-8 7H0z" fill="url(#g-ij)"/><rect x="4" y="4" width="16" height="16" fill="#000"/><text x="6" y="12" font-size="8.500" font-weight="700" font-family="Liberation Mono" fill="#fff">IJ</text><path d="M6 17.500h6" stroke="#fff" stroke-width="1.300"/></svg></span>
<span class="app-icon"><svg><use href="#telegram"/></svg></span>
</div>
<div class="apps-current">
<span class="app-current"><svg viewBox="0 0 24 24"><use href="#brave" width="24" height="24"/><use href="#avatar" x="10" y="0" width="12" height="12"/></svg><i class="dot"></i></span>
<svg class="more" viewBox="0 0 20 6"><g fill="#fff"><circle cx="2.300" cy="3" r="2"/><circle cx="10" cy="3" r="2"/><circle cx="17.700" cy="3" r="2"/></g></svg>
</div>
<div class="tray">
<span class="tray-icon big"><svg viewBox="0 0 24 24"><path d="m4.500 15.500 7.500-7.500 7.500 7.500" stroke-width="2.200"/></svg></span>
<span class="tray-icon big"><svg viewBox="0 0 24 24"><path d="M.8 12C.8 0 17-4 22.500 7.500M22.700 0v7.700H15M8.500 17H1.300v6.500M1.500 17c2 4 6 6.500 11.500 6.500" stroke-width="1.200"/><circle cx="18" cy="18" r="6" fill="#ff9a0a" stroke="none"/></svg></span>
<span class="tray-icon big cloud"><svg viewBox="0 0 24 24"><path d="M6 20a6 6 0 0 1-2-11.500 8 8 0 0 1 14.500 0A6 6 0 0 1 19 20z" fill="#7c7c7c" stroke="none"/><path d="M2 2l20 20" stroke="#1d1d1d" stroke-width="3"/><path d="M2 2l20 20" stroke-width="1.300"/></svg></span>
<span class="tray-icon"><svg viewBox="0 0 24 24"><path d="M.8 8.500c6.500-6 16-6 22.400 0M4.300 12.300c4.500-4 11-4 15.400 0M7.800 15.800c2.500-2 6-2 8.400 0" stroke-width="1.600"/><circle cx="12" cy="18.300" r="2.200" fill="#fff" stroke="none"/></svg></span>
<span class="tray-icon"><svg viewBox="0 0 24 24"><path d="M1 9h4l6-5.500v17L5 15H1zM14 8.500c1.800 2 1.800 5 0 7M17 5.500c3.500 4 3.500 9 0 13M20 3c5 5.500 5 12.500 0 18" stroke-width="1.500"/></svg></span>
<span class="tray-icon"><svg viewBox="0 0 24 24"><path d="M11 5h8a2 2 0 0 1 2 2v10a2 2 0 0 1-2 2H4" stroke-width="1.500"/><path d="M21.500 9.500h2v5h-2z" fill="#fff"/><path d="M6 0c4 4 5 11 2 14l-4 2-2 3H.5l1-4C-2 10 1 5 6 0z" fill="#fff" stroke="none"/><path d="M9 8c1 4 0 8-3 10" stroke-width="1.200"/></svg></span>
<div class="clock"><span>8:52 PM</span><span>10/29/2025</span></div>
</div>
</footer>
</body>
</html>
```
FILE: styles.css
```css
* { box-sizing: border-box; }
body {
  margin: 0;
  width: 1920px;
  height: 1080px;
  display: flex;
  flex-direction: column;
  overflow: hidden;
  background: #fff;
  font-family: Inter, sans-serif;
  color: #000;
}
svg { display: block; flex: none; }
.defs { position: absolute; width: 0; height: 0; }

/* Browser chrome */
.browser { flex: none; height: 122px; background: #201f24; }
.tabstrip { height: 60px; display: flex; align-items: center; padding-left: 2px; }
.tabs { display: flex; height: 24px; }
.tab {
  width: 22.5px;
  height: 24px;
  padding: 0 3px 0 2px;
  display: flex;
  align-items: center;
  justify-content: center;
  border-right: 1px solid #3c3b40;
  background: url("data:image/svg+xml,%3Csvg xmlns='http://www.w3.org/2000/svg' width='17' height='24' viewBox='0 0 17 24'%3E%3Ccircle cx='8.5' cy='12' r='10.800' fill='none' stroke='%23707074' stroke-width='2' stroke-dasharray='8.310 3' stroke-dashoffset='4.155'/%3E%3C/svg%3E") no-repeat 2px 0;
}
.tab.wide { width: 24px; padding-right: 4px; background-size: 18px 24px; }
.tab.plain, .tab.square { background-image: none; }
.tab svg { width: 16px; height: 16px; border-radius: 50%; }
.tab.plain svg { width: 17px; height: 24px; border-radius: 0; }
.tab.wide.plain svg { width: 19px; height: 22px; }
.tab.wide.plain svg.hub { height: 24px; }
.tab.square { padding-left: 1px; }
.tab.square svg { width: 17px; height: 24px; background: #000; border-radius: 0; }
.tab.last { border-right-color: transparent; }
.tab-active {
  width: 48px;
  height: 48px;
  margin-left: 1px;
  border-radius: 12px;
  background: #3b3a3f;
  display: grid;
  place-items: center;
}
.tab-active svg { width: 12px; height: 12px; }
.tab.after { width: 27px; padding: 0 4px 0 5px; }
.newtab { width: 16px; height: 16px; margin-left: 19px; }
.winctl { display: flex; margin-left: auto; padding-right: 27px; gap: 53px; }
.winctl svg { width: 16px; height: 16px; }

.toolbar {
  height: 62px;
  padding: 0 10.5px;
  display: flex;
  align-items: center;
  background: #3b3a3f;
  border-radius: 12px 12px 0 0;
  border-bottom: 2px solid #2f2e33;
}
.toolbar svg { width: 26px; height: 26px; fill: none; stroke-width: 1.800; }
.nav-buttons { display: flex; gap: 19px; padding-left: 9.5px; }
.toolbar .nav-buttons svg { stroke-width: 2; }
.toolbar .bookmark { margin-left: 186px; stroke-width: 2; }
.address {
  width: 1086px;
  height: 48px;
  margin-left: 21px;
  padding: 0 4.500px 0 14px;
  display: flex;
  align-items: center;
  background: #252429;
  border-radius: 12px;
}
.address .info { width: 20px; height: 20px; }
.url { margin-left: 23px; padding-top: 1px; font: 20px/47px "Open Sans", sans-serif; letter-spacing: -0.2px; color: #ececf0; }
.port { color: #b4b3b8; }
.address-actions { display: flex; align-items: center; margin-left: auto; }
.address-actions svg { margin: 0 12.5px; stroke: #bcbbc2; }
.address-actions .bar { width: 2px; height: 24px; margin: 0 0 0 -1px; background: #68676c; }
.address-actions .shield { width: 27px; height: 27px; margin: 0 12px 0 14.5px; stroke: none; }
.extensions { display: flex; align-items: center; margin-left: auto; }
.extensions svg { margin: 0 9.5px; stroke: #f0f0f2; }
.extensions .bar { width: 3px; height: 24px; margin: 0 12px; background: #252429; border-radius: 2px; }
.extensions .avatar { width: 24px; height: 24px; margin: 0 10.5px; stroke: none; }

/* Application */
.app { position: relative; flex: none; height: 886px; display: flex; overflow: hidden; }
.sidebar {
  position: relative;
  z-index: 3;
  width: 307px;
  display: flex;
  flex-direction: column;
  background: #fff;
  box-shadow: 0 12px 18px -3.600px rgba(0,0,0,.1), 0 4.800px 7.200px -4.800px rgba(0,0,0,.1);
}
.brand {
  height: 96px;
  padding-left: 37px;
  line-height: 95px;
  font-size: 36px;
  font-weight: 700;
  border-bottom: 1px solid #e5e7eb;
}
.menu { flex: 1; padding: 4.800px 14.400px; display: flex; flex-direction: column; gap: 9.600px; }
.menu-item, .logout {
  display: flex;
  align-items: center;
  gap: 14.400px;
  font-size: 21.600px;
  line-height: 33.600px;
  font-weight: 500;
}
.menu-item { height: 62.400px; padding: 0 14.400px; color: #4b5563; }
.line-icon, .heart { fill: none; stroke: currentColor; stroke-width: 2; stroke-linecap: round; stroke-linejoin: round; }
.line-icon { width: 28.800px; height: 28.800px; }
.logout { height: 101px; padding: 1px 0 0 38.400px; color: #ef4444; border-top: 1px solid #e5e7eb; }
.content { flex: 1; display: flex; flex-direction: column; }
.topbar {
  position: relative;
  z-index: 2;
  flex: none;
  height: 96px;
  background: #fff;
  box-shadow: 0 4.800px 7.200px -1.200px rgba(0,0,0,.1), 0 2.400px 4.800px -2.400px rgba(0,0,0,.1);
}
.page { display: flex; flex-direction: column; align-items: center; gap: 57.600px; padding-right: 9px; }
.card {
  width: 806.400px;
  background: #fff;
  border-radius: 19.200px;
  box-shadow: 0 24px 30px -6px rgba(0,0,0,.1), 0 9.600px 12px -7.200px rgba(0,0,0,.1);
}
.form-card {
  height: 530px;
  margin-top: -60px;
  padding: 77.400px 38.400px 0;
  display: grid;
  grid-template-columns: 1fr 1fr;
  align-content: start;
  gap: 28.800px;
}
.field { display: flex; flex-direction: column; gap: 4.800px; font-size: 16.800px; line-height: 24px; font-weight: 500; }
.field.full { grid-column: 1 / -1; }
.field input, .field select {
  width: 100%;
  height: 59.600px;
  padding: 0 14.400px;
  font: 400 19.200px/28.800px Inter, sans-serif;
  color: #000;
  background: #fff;
  border: 1px solid #d1d5db;
  border-radius: 9.600px;
  outline: none;
}
.field input::placeholder { color: #9ca3af; opacity: 1; }
.field select {
  appearance: none;
  background: #fff url("data:image/svg+xml,%3Csvg xmlns='http://www.w3.org/2000/svg' width='12' height='8'%3E%3Cpath d='M1.500 1.500 6 6l4.500-4.500' fill='none' stroke='%23374151' stroke-width='2'/%3E%3C/svg%3E") no-repeat right 12.500px center;
}
.info-card { height: 206.400px; padding: 38.400px; display: flex; gap: 19.200px; }
.heart { width: 48px; height: 48px; margin-top: 1px; }
.info-card h3 { margin: 0 0 9.600px; font-size: 24px; line-height: 33.600px; font-weight: 600; }
.info-card p { margin: 0; font-size: 19.200px; line-height: 28.600px; letter-spacing: 0.015px; }
.toast {
  position: absolute;
  z-index: 4;
  top: 19px;
  right: 19px;
  width: 231px;
  height: 54px;
  padding-left: 12px;
  display: flex;
  align-items: center;
  gap: 12px;
  border-radius: 9px;
  background: #1e1e3f;
  color: #dcd9fb;
  font-size: 19.200px;
  box-shadow: 0 4px 12px rgba(0,0,0,.1), 0 3px 4px rgba(0,0,0,.05);
}
.toast span { padding-bottom: 2px; }
.toast svg { width: 24px; height: 24px; }
.scroll-thumb { position: absolute; z-index: 4; right: 0; top: 520px; width: 9px; height: 366px; border-radius: 5px; background: #4b5563; }

/* Taskbar */
.taskbar { flex: none; height: 72px; display: flex; align-items: center; background: #1d1d1d; border-top: 2px solid #404040; }
.widget { position: relative; width: 217.500px; height: 70px; padding: 21px 0 0 32px; }
.widget svg { width: 34px; height: 24px; }
.badge {
  position: absolute;
  left: 46px;
  top: 8px;
  width: 25px;
  height: 25px;
  border-radius: 50%;
  background: #ff99a4;
  color: #000;
  font: 16px/24px "Open Sans", sans-serif;
  text-align: center;
}
.apps { display: flex; height: 70px; }
.app-icon { width: 48px; display: flex; flex-direction: column; align-items: center; padding-top: 22px; }
.app-icon svg { width: 24px; height: 24px; }
.app-icon.running::after { content: ""; width: 6px; height: 6px; margin-top: 12px; border-radius: 50%; background: #999; }
.apps-current {
  width: 104px;
  height: 70px;
  margin-left: 4.500px;
  padding-left: 5px;
  display: flex;
  align-items: center;
  border-left: 2px solid #888;
  border-right: 2px solid #888;
}
.app-current {
  position: relative;
  width: 42px;
  height: 60px;
  padding: 17px 0 0;
  display: flex;
  flex-direction: column;
  align-items: center;
  border: 1px solid #353535;
  border-radius: 6px;
  background: #292929;
}
.app-current svg { width: 24px; height: 24px; }
.app-current::after { content: ""; width: 16px; height: 5px; margin-top: 11px; border-radius: 3px; background: #a8a8a3; }
.dot { position: absolute; right: 6px; top: 11px; width: 6px; height: 6px; border-radius: 50%; background: #9b9b9b; }
.more { width: 20px; height: 6px; margin-left: 17px; }
.tray { display: flex; align-items: center; margin-left: auto; padding-right: 29px; }
.tray-icon { width: 36px; display: flex; justify-content: center; }
.tray-icon.big { width: 48px; }
.tray-icon.cloud { margin-right: 6px; }
.tray-icon svg { width: 24px; height: 24px; fill: none; stroke: #fff; }
.clock {
  width: 112px;
  padding-bottom: 3px;
  display: flex;
  flex-direction: column;
  align-items: flex-end;
  font: 17.500px/24px "Open Sans", sans-serif;
  color: #fff;
}
```
